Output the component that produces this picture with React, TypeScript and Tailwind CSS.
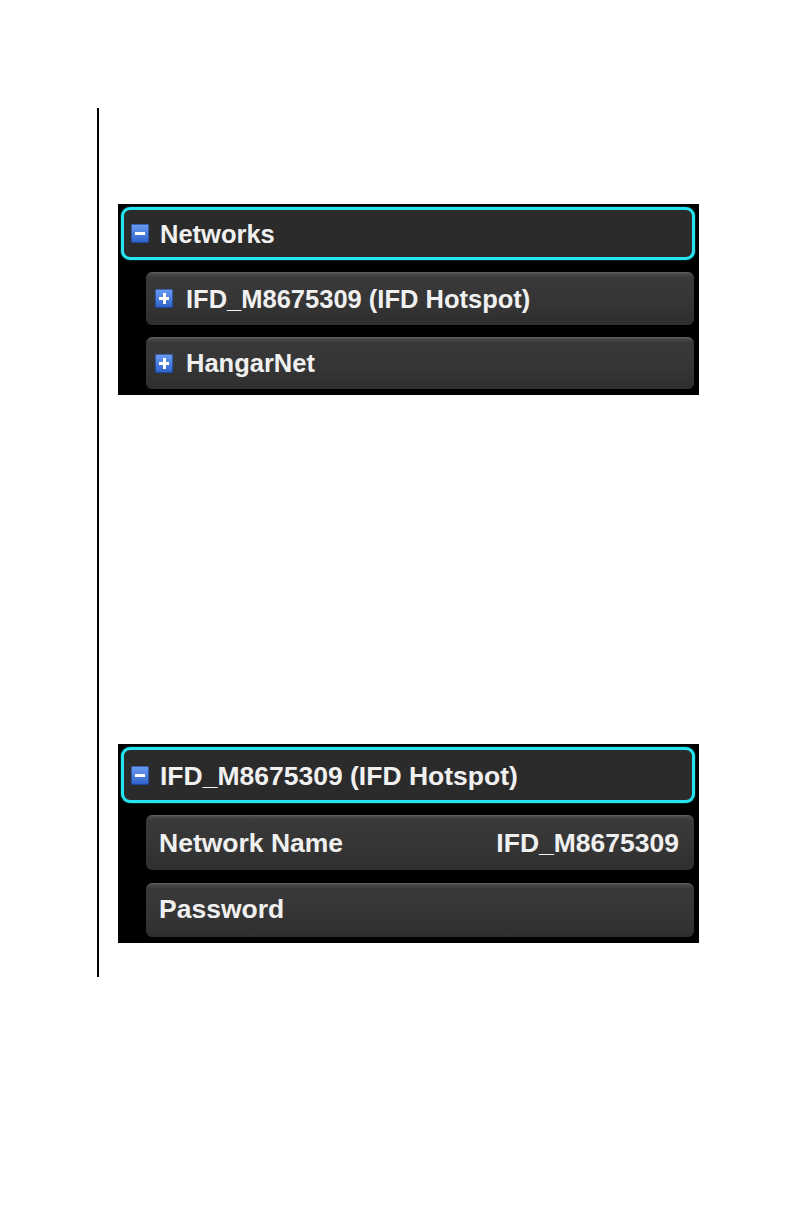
import React from "react";

function Box({ kind }: { kind: "minus" | "plus" }) {
  return (
    <div className="relative w-[18px] h-[19px] rounded-[2px] bg-[linear-gradient(to_bottom,#6c9ef2,#2d60c6)] shadow-[inset_0_0_0_1px_rgba(20,50,130,0.55)] shrink-0">
      <div className="absolute left-[4px] right-[4px] top-[8px] h-[3px] bg-white" />
      {kind === "plus" && (
        <div className="absolute top-[4px] bottom-[4px] left-[7.5px] w-[3px] bg-white" />
      )}
    </div>
  );
}

function Header({ label, h, size }: { label: string; h: string; size: string }) {
  return (
    <div
      className={`flex items-center ${h} w-[574px] rounded-[9px] border-[3px] border-[#26e4f0] bg-[#2b2b2b] pl-[7px] gap-[11px] shadow-[0_0_2px_rgba(38,228,240,0.6)]`}
    >
      <Box kind="minus" />
      <span className={`${size} font-bold text-[#f0f0f0] leading-none pt-[2px]`}>{label}</span>
    </div>
  );
}

function Row({
  h,
  children,
}: {
  h: string;
  children: React.ReactNode;
}) {
  return (
    <div
      className={`flex items-center ${h} w-[548px] ml-[25px] rounded-[6px] bg-[linear-gradient(to_bottom,#666666_0px,#474747_2px,#393939_6px,#353535_60%,#2e2e2e_100%)] shadow-[0_1px_1px_rgba(0,0,0,0.9)]`}
    >
      {children}
    </div>
  );
}

export default function App() {
  return (
    <div
      className="w-[792px] h-[1224px] bg-white pl-[97px] pt-[108px]"
      style={{ fontFamily: '"Liberation Sans", Arial, sans-serif' }}
    >
      <div className="flex">
        <div className="w-[2px] bg-black" />
        <div className="flex flex-col pl-[19px] pt-[96px] pb-[34px]">
          {/* Panel 1 */}
          <div className="flex flex-col w-[581px] h-[191px] bg-black pt-[3px] pl-[3px] gap-[12px]">
            <Header label="Networks" h="h-[53px]" size="text-[25.5px]" />
            <Row h="h-[53px]">
              <div className="pl-[9px] flex items-center gap-[13px]">
                <Box kind="plus" />
                <span className="text-[25.5px] font-bold text-[#f0f0f0] leading-none pt-[2px]">
                  IFD_M8675309 (IFD Hotspot)
                </span>
              </div>
            </Row>
            <Row h="h-[52px]">
              <div className="pl-[9px] flex items-center gap-[13px]">
                <Box kind="plus" />
                <span className="text-[25.5px] font-bold text-[#f0f0f0] leading-none pt-[2px]">
                  HangarNet
                </span>
              </div>
            </Row>
          </div>

          <div className="h-[349px]" />

          {/* Panel 2 */}
          <div className="flex flex-col w-[581px] h-[199px] bg-black pt-[3px] pl-[3px]">
            <Header label="IFD_M8675309 (IFD Hotspot)" h="h-[56px]" size="text-[26.5px]" />
            <div className="h-[12px]" />
            <Row h="h-[55px]">
              <div className="flex w-full items-center justify-between pl-[13px] pr-[15px]">
                <span className="text-[26.5px] font-bold text-[#f0f0f0] leading-none pt-[2px]">
                  Network Name
                </span>
                <span className="text-[26.5px] font-bold text-[#f0f0f0] leading-none pt-[2px]">
                  IFD_M8675309
                </span>
              </div>
            </Row>
            <div className="h-[13px]" />
            <Row h="h-[54px]">
              <div className="pl-[13px]">
                <span className="text-[26.5px] font-bold text-[#f0f0f0] leading-none pt-[2px]">
                  Password
                </span>
              </div>
            </Row>
          </div>
        </div>
      </div>
    </div>
  );
}
